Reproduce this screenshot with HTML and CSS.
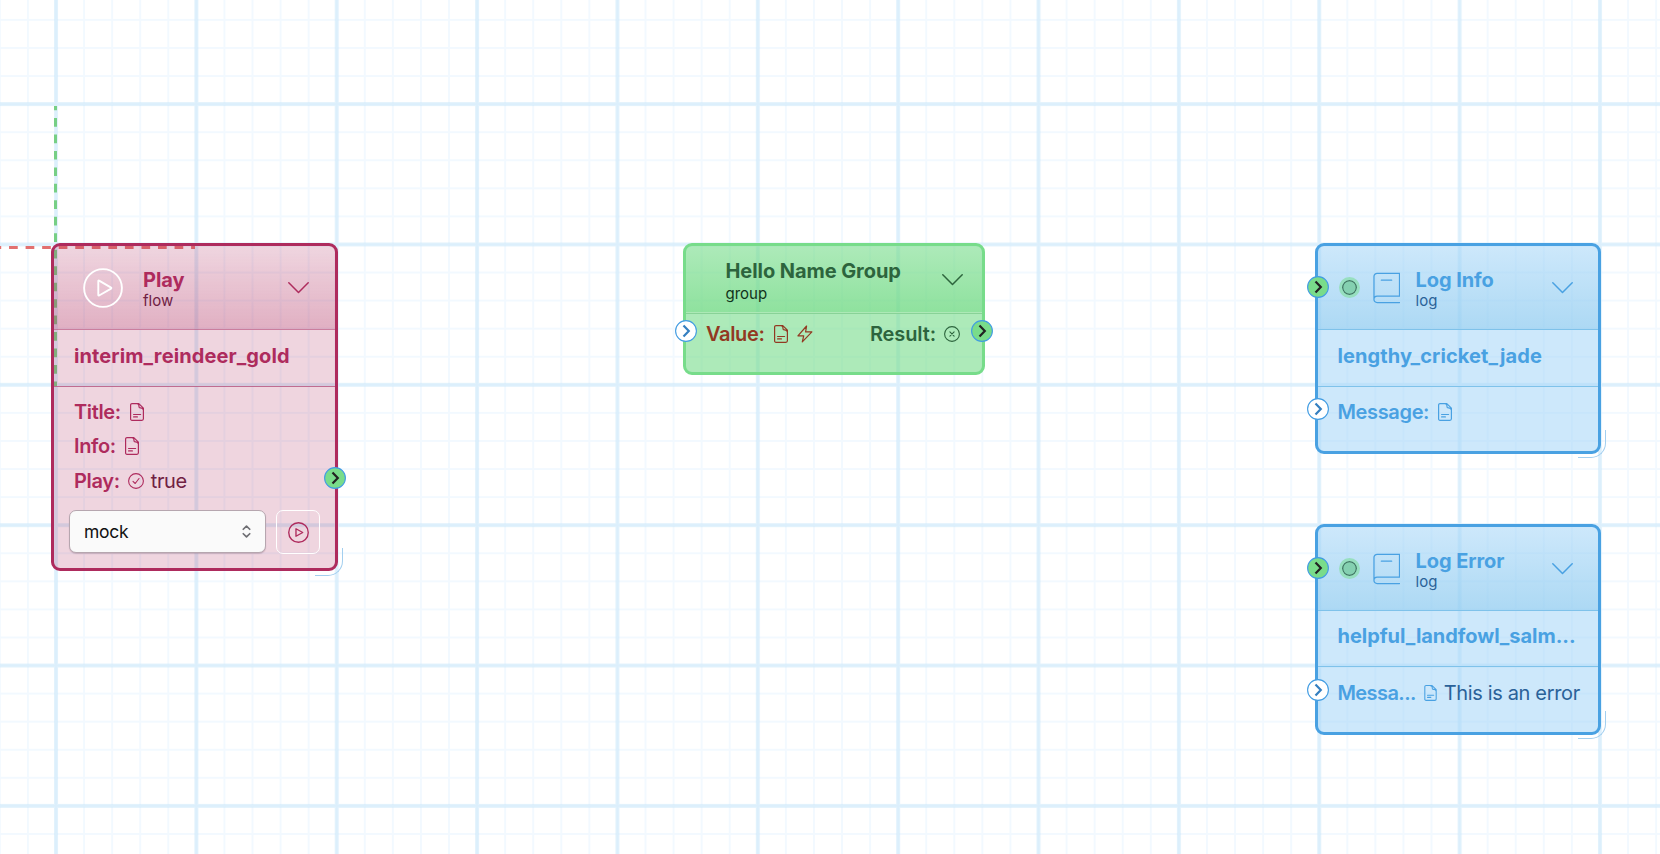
FILE: index.html
```html
<!DOCTYPE html>
<html lang="en">
<head>
<meta charset="utf-8">
<title>Flow editor</title>
<link rel="stylesheet" href="styles.css">
</head>
<body>
<svg class="symbols" aria-hidden="true">
  <symbol id="doc" viewBox="0 0 14 18"><path d="M2 .6h6.800l4.600 4.600v10.600a1.500 1.500 0 0 1-1.500 1.500H2A1.400 1.400 0 0 1 .6 15.800V2A1.400 1.400 0 0 1 2 .6zM7 .7c1.600.3 2 1 2 2.200v.8c0 .8.4 1.200 1.200 1.200h.6c1.300 0 2.200.6 2.500 2.100M3.600 11.500h7M3.600 13.900h3.800"/></symbol>
  <symbol id="chevron" viewBox="0 0 21 12"><path d="M.8.800 10.500 10.500 20.200.8"/></symbol>
  <symbol id="book" viewBox="0 0 28 32"><path d="M27 24.300V1H4.200A3.200 3.200 0 0 0 1 4.200V28M27 24.300H4.200A3.200 3.200 0 0 0 1 27.500a3.200 3.200 0 0 0 3.200 3.300H27M8.500 8H19"/></symbol>
</svg>
<main class="canvas">
  <svg class="grid" width="1660" height="854">
    <defs>
      <pattern id="minor" x="56" y="104.100" width="28.072" height="28.072" patternUnits="userSpaceOnUse"><path class="minor-line" d="M0 0V28.072M28.072 0V28.072M0 0H28.072M0 28.072H28.072"/></pattern>
      <pattern id="major" x="56" y="104.100" width="140.360" height="140.360" patternUnits="userSpaceOnUse"><path class="major-line" d="M0 0V140.360M140.360 0V140.360M0 0H140.360M0 140.360H140.360"/></pattern>
    </defs>
    <rect width="1660" height="854" fill="url(#minor)"/>
    <rect width="1660" height="854" fill="url(#major)"/>
    <path class="axis-y" d="M55.500 106V386"/>
    <path class="axis-x" d="M-7.500 247.500H195"/>
  </svg>

  <section class="node play">
    <header class="head">
      <svg class="play-icon" viewBox="0 0 40 40"><circle cx="20" cy="20" r="18.900"/><path d="M15.300 13v14c0 .5.400.7.800.5l12-6.900c.4-.2.4-.8 0-1l-12-7c-.4-.3-.8-.1-.8.400z"/></svg>
      <div class="titles"><h2>Play</h2><span class="type">flow</span></div>
      <svg class="chevron"><use href="#chevron"/></svg>
    </header>
    <div class="name">interim_reindeer_gold</div>
    <div class="rows">
      <div class="row"><b>Title:</b><svg class="doc"><use href="#doc"/></svg></div>
      <div class="row"><b>Info:</b><svg class="doc"><use href="#doc"/></svg></div>
      <div class="row"><b>Play:</b><svg class="round" viewBox="0 0 16 16"><circle cx="8" cy="8" r="7.400"/><path d="M5 8.300 7.200 10.500 11 5.500"/></svg><span class="value">true</span></div>
    </div>
    <div class="controls">
      <div class="select"><span>mock</span><svg class="updown" viewBox="0 0 10 15"><path d="M1.400 5 5 1.500 8.600 5M1.400 10 5 13.500 8.600 10"/></svg></div>
      <button class="run"><svg viewBox="0 0 20 20"><circle cx="10" cy="10" r="9.300"/><path d="M7.600 6.400v7.200L14 10z"/></svg></button>
    </div>
    <svg class="port out" style="top:221.600px" viewBox="0 0 22 22"><circle cx="11" cy="11" r="10.400"/><path d="M8.500 5.500 13.800 11 8.500 16.500"/></svg>
    <i class="resize"></i>
  </section>

  <section class="node group">
    <header class="head">
      <div class="titles"><h2>Hello Name Group</h2><span class="type">group</span></div>
      <svg class="chevron"><use href="#chevron"/></svg>
    </header>
    <div class="rows">
      <div class="row">
        <b class="input">Value:</b><svg class="doc input"><use href="#doc"/></svg><svg class="bolt input" viewBox="0 0 16 18"><path d="M9.600 1 .9 10.800H6.700L5.300 16.900 14.900 6.900H8.600z"/></svg>
        <b class="result">Result:</b><svg class="round" viewBox="0 0 16 16"><circle cx="8" cy="8" r="7.400"/><path d="M5.900 5.900 10.100 10.100M10.100 5.900 5.900 10.100"/></svg>
      </div>
    </div>
    <svg class="port in" style="top:75px" viewBox="0 0 22 22"><circle cx="11" cy="11" r="10.400"/><path d="M8.500 5.500 13.800 11 8.500 16.500"/></svg>
    <svg class="port out" style="top:75px" viewBox="0 0 22 22"><circle cx="11" cy="11" r="10.400"/><path d="M8.500 5.500 13.800 11 8.500 16.500"/></svg>
  </section>

  <section class="node log info">
    <header class="head">
      <i class="status"></i>
      <svg class="book"><use href="#book"/></svg>
      <div class="titles"><h2>Log Info</h2><span class="type">log</span></div>
      <svg class="chevron"><use href="#chevron"/></svg>
    </header>
    <div class="name">lengthy_cricket_jade</div>
    <div class="rows"><div class="row"><b>Message:</b><svg class="doc"><use href="#doc"/></svg></div></div>
    <svg class="port in event" style="top:31.300px" viewBox="0 0 22 22"><circle cx="11" cy="11" r="10.400"/><path d="M8.500 5.500 13.800 11 8.500 16.500"/></svg>
    <svg class="port in" style="top:153px" viewBox="0 0 22 22"><circle cx="11" cy="11" r="10.400"/><path d="M8.500 5.500 13.800 11 8.500 16.500"/></svg>
    <i class="resize"></i>
  </section>

  <section class="node log error">
    <header class="head">
      <i class="status"></i>
      <svg class="book"><use href="#book"/></svg>
      <div class="titles"><h2>Log Error</h2><span class="type">log</span></div>
      <svg class="chevron"><use href="#chevron"/></svg>
    </header>
    <div class="name">helpful_landfowl_salm...</div>
    <div class="rows"><div class="row"><b>Messa...</b><svg class="doc"><use href="#doc"/></svg><span class="value">This is an error</span></div></div>
    <svg class="port in event" style="top:31.300px" viewBox="0 0 22 22"><circle cx="11" cy="11" r="10.400"/><path d="M8.500 5.500 13.800 11 8.500 16.500"/></svg>
    <svg class="port in" style="top:152.500px" viewBox="0 0 22 22"><circle cx="11" cy="11" r="10.400"/><path d="M8.500 5.500 13.800 11 8.500 16.500"/></svg>
    <i class="resize"></i>
  </section>
</main>
</body>
</html>
```
FILE: styles.css
```css
* { box-sizing: border-box; }
body { margin: 0; background: #fff; font-family: Inter, "Liberation Sans", sans-serif; font-size: 20px; }
svg { flex: none; fill: none; stroke: currentColor; stroke-linecap: round; stroke-linejoin: round; }
.symbols { position: absolute; width: 0; height: 0; }
.canvas { position: relative; width: 1660px; height: 854px; overflow: hidden; }
.grid { display: block; stroke: none; }
.minor-line { stroke: #f2f9ff; stroke-width: 2; }
.major-line { stroke: rgba(200, 230, 250, .52); stroke-width: 4; }
.minor-line, .major-line { stroke-linecap: butt; }
.axis-y, .axis-x { stroke-width: 3; stroke-linecap: butt; }
.axis-y { stroke: #77cf85; stroke-dasharray: 8.700 7.770; stroke-dashoffset: 4.500; }
.axis-x { stroke: #e2706f; stroke-dasharray: 8.700 7.850; }

.node { position: absolute; display: flex; flex-direction: column; border: 3px solid var(--line); border-radius: 9px; color: var(--line); background: var(--fill); }
.play { --line: #ae2b5d; --fill: rgba(174, 43, 93, .2); --shade: rgba(174, 43, 93, .22); --dark: #702143; left: 51px; top: 243px; width: 287px; height: 328px; }
.group { --line: #77dc8a; --fill: rgba(119, 220, 138, .6); --shade: rgba(100, 214, 120, .42); --dark: #10331a; left: 683px; top: 243px; width: 302px; height: 132px; color: #2d643d; }
.log { --line: #49a1e2; --fill: rgba(164, 214, 247, .55); --shade: rgba(120, 192, 232, .38); --dark: #2a6299; left: 1315px; width: 286px; height: 210.500px; }
.info { top: 243px; }
.error { top: 524px; }

.head { display: flex; align-items: center; height: 84px; flex: none; border-bottom: 1px solid rgba(174, 43, 93, .5); background: linear-gradient(transparent, var(--shade)); }
.log .head, .log .name { border-color: #7fc2ea; }
.play .head { padding: 0 26px 0 29px; }
.log .head { padding: 0 25.500px 0 21px; }
.group .head { height: 68px; padding: 0 19px 0 39.500px; border-bottom-color: #88d297; box-shadow: inset 0 -1px #ace9b6; }
.titles { display: flex; flex-direction: column; flex: 1; padding-top: 2px; }
.play .titles { margin-left: 20px; }
.log .titles { margin-left: 15.500px; }
h2 { margin: 0; font-size: 20px; line-height: 24px; font-weight: 700; letter-spacing: -.07px; }
.type { color: var(--dark); font-size: 15px; line-height: 18px; }
.group .type { line-height: 21px; }
.group .titles { padding-top: 4px; }
.chevron { width: 21px; height: 12px; stroke-width: 1.500; }
.play-icon { width: 40px; height: 40px; color: #fff; stroke-width: 1.900; }
.book { width: 27.500px; height: 32px; margin-left: 12.500px; stroke-width: 1.300; }
.status { display: block; width: 21px; height: 21px; border-radius: 50%; border: 3px solid #97dfbf; background: #84d0b0; box-shadow: inset 0 0 0 1.300px #417563; }

.name { height: 57px; flex: none; border-bottom: 1px solid rgba(174, 43, 93, .6); padding: 0 20px; line-height: 53px; font-weight: 700; letter-spacing: .1px; white-space: nowrap; }
.log .name { padding-left: 19.500px; }
.error .name { height: 56px; line-height: 51px; letter-spacing: -.05px; }
.rows { padding: 7.500px 20px 0; }
.log .rows { padding-left: 19.500px; }
.error .rows { padding-top: 8.500px; }
.row { display: flex; align-items: center; height: 34.500px; white-space: nowrap; }
.row b { font-weight: 600; letter-spacing: -.35px; }
.error .row b { letter-spacing: -.58px; }
.doc { width: 14px; height: 18px; margin-left: 9px; stroke-width: 1.200; }
.round { width: 16px; height: 16px; margin-left: 8px; stroke-width: 1.100; }
.value { margin-left: 7px; color: var(--dark); letter-spacing: -.35px; }
.input { color: #923922; }
.bolt { width: 16px; height: 18px; margin-left: 9px; stroke-width: 1.200; }
.group .rows { padding: 3px 22px 0 20px; }
.group .row .result { margin-left: auto; letter-spacing: -.1px; }
.error .doc { width: 13px; height: 16px; margin-left: 8px; }

.controls { display: flex; gap: 10px; margin-top: 12px; padding-left: 15px; }
.select { display: flex; align-items: center; justify-content: space-between; width: 197px; height: 43px; padding: 0 14px; border: 1px solid #b6a6af; border-radius: 7px; background: #fafafa; color: #111; font-size: 17.500px; letter-spacing: -.3px; box-shadow: 0 1px 1px rgba(80, 40, 60, .2); }
.updown { width: 9px; height: 15px; color: #6e6e73; stroke-width: 1.900; }
.run { display: grid; place-items: center; width: 44px; height: 44px; padding: 0; border: 1px solid #fff; border-radius: 7px; background: none; color: inherit; }
.run svg { width: 21px; height: 21px; stroke-width: 1.300; }

.port { position: absolute; width: 22px; height: 22px; margin-top: -1px; stroke: #222; stroke-width: 2.200; stroke-linecap: butt; stroke-linejoin: miter; }
.port circle { fill: #79dc8a; stroke: #419ce2; stroke-width: 1.100; }
.port.in { left: -11px; stroke: #347fc0; }
.port.in circle { fill: #fff; }
.port.event { stroke: #222; }
.port.event circle { fill: #79dc8a; }
.port.out { right: -11px; }
.resize { position: absolute; right: -7.500px; bottom: -7.500px; width: 28px; height: 28px; border: solid #a3cfef; border-width: 0 1px 1px 0; border-radius: 0 0 15px 0; }
```
